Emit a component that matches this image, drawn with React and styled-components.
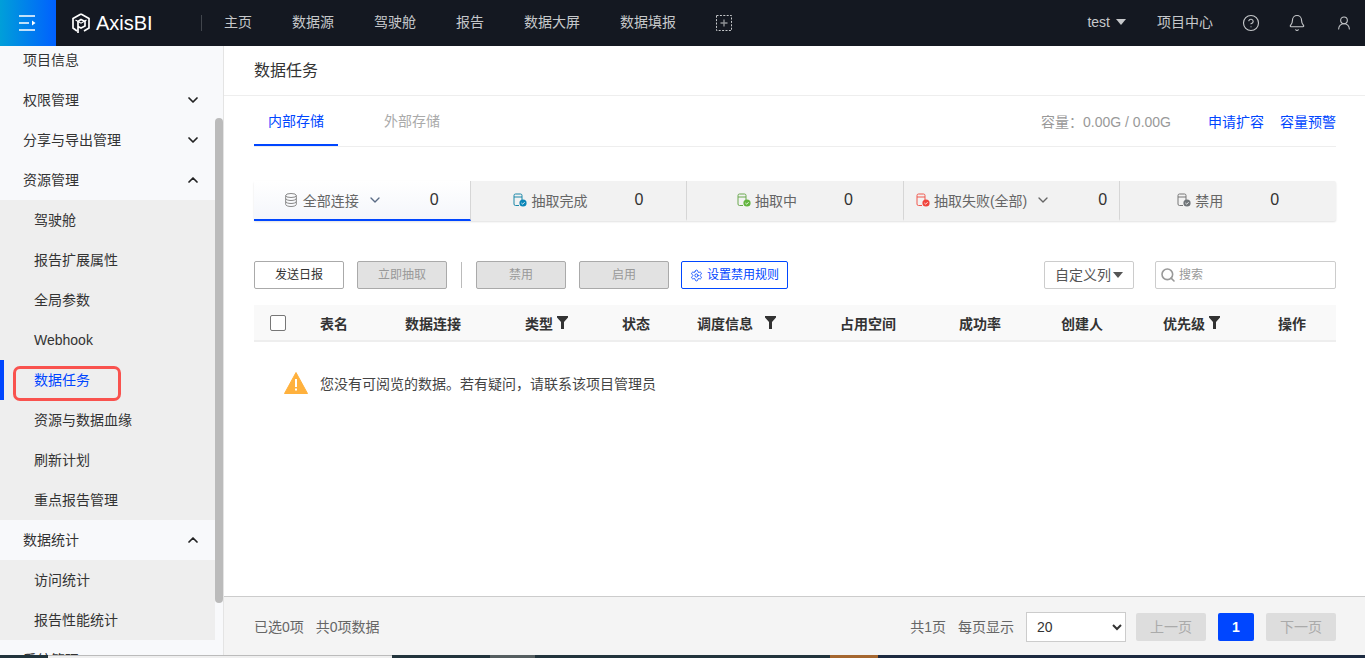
import React from 'react';
import styled, { createGlobalStyle } from 'styled-components';
import { ChevronDown, ChevronUp, Search, CircleHelp, Bell, UserRound, Settings } from 'lucide-react';

const FONT = '"Liberation Sans", "Noto Sans CJK SC", sans-serif';
const BLUE = '#0046ff';

const GlobalStyle = createGlobalStyle`
  html, body {
    margin: 0;
    padding: 0;
    height: 100%;
    overflow: hidden;
    background: #fff;
    font-family: ${FONT};
    font-size: 14px;
    line-height: 1.2;
    color: #333;
  }
  * { box-sizing: border-box; }
`;

const Page = styled.div`
  width: 1365px;
  height: 658px;
  display: flex;
  flex-direction: column;
  overflow: hidden;
`;

/* top bar */
const Header = styled.header`
  height: 46px;
  flex: none;
  display: flex;
  align-items: center;
  background: #141821;
  color: #c6c8cb;
`;

const MenuToggle = styled.div`
  width: 56px;
  height: 46px;
  display: flex;
  align-items: center;
  justify-content: center;
  background: linear-gradient(90deg, #009fd9, #0060ff);
`;

const Brand = styled.div`
  display: flex;
  align-items: center;
  gap: 6px;
  margin-left: 16px;
  color: #fff;
  font-size: 20px;
  width: 130px;
  border-right: 1px solid #41454c;
  height: 16px;
`;

const Nav = styled.nav`
  display: flex;
  align-items: center;
  gap: 40px;
  margin-left: 22px;
`;

const NavText = styled.span`
  padding-bottom: 2px;
`;

const UserArea = styled.div`
  margin-left: auto;
  display: flex;
  align-items: center;
  padding-right: 13px;
`;

const UserName = styled.span`
  display: flex;
  align-items: center;
  gap: 6px;
  margin-right: 31px;
  padding-bottom: 2px;
`;

const Caret = styled.i`
  width: 0;
  height: 0;
  border-left: 5.5px solid transparent;
  border-right: 5.5px solid transparent;
  border-top: 6px solid ${({ $color }) => $color || '#c6c8cb'};
`;

const ProjectCenter = styled.span`
  margin-right: 29px;
  padding-bottom: 2px;
`;

const TopIcon = styled.span`
  display: flex;
  margin-right: ${({ $gap }) => $gap}px;
`;

/* body */
const Body = styled.div`
  flex: 1;
  min-height: 0;
  display: flex;
`;

const Sidebar = styled.aside`
  width: 224px;
  flex: none;
  display: flex;
  background: #f8f9fb;
  border-right: 1px solid #e4e4e4;
  overflow: hidden;
`;

const SideMenu = styled.div`
  width: 215px;
  flex: none;
  margin-top: -6px;
`;

const GroupRow = styled.div`
  height: 40px;
  display: flex;
  align-items: center;
  justify-content: space-between;
  padding: 0 14px 0 23px;
  color: #333;
`;

const ChildList = styled.div`
  background: #eee;
`;

const ChildRow = styled.div`
  position: relative;
  height: 40px;
  display: flex;
  align-items: center;
  padding-left: 34px;
  color: ${({ $active }) => ($active ? BLUE : '#333')};
`;

const ActiveMark = styled.span`
  position: absolute;
  left: 0;
  top: 0;
  width: 4px;
  height: 40px;
  background: ${BLUE};
`;

const RedBox = styled.span`
  position: absolute;
  left: 13px;
  top: 6px;
  width: 108px;
  height: 35px;
  border: 3px solid #f9524e;
  border-radius: 7px;
`;

const ScrollTrack = styled.div`
  flex: 1;
  padding: 72px 0 0;
`;

const ScrollThumb = styled.div`
  width: 8px;
  height: 485px;
  border-radius: 4px;
  background: #bbb;
`;

const Main = styled.main`
  flex: 1;
  min-width: 0;
  display: flex;
  flex-direction: column;
`;

const TitleBar = styled.div`
  height: 50px;
  flex: none;
  display: flex;
  align-items: center;
  padding: 1px 0 0 30px;
  font-size: 16px;
  color: #333;
  border-bottom: 1px solid #eee;
`;

const Content = styled.div`
  flex: 1;
  min-height: 0;
  padding: 0 29px 0 30px;
`;

const TabBar = styled.div`
  height: 51px;
  display: flex;
  align-items: stretch;
  line-height: normal;
  border-bottom: 1px solid #eee;
`;

const Tab = styled.div`
  width: ${({ $active }) => ($active ? 84 : 148)}px;
  height: 50px;
  display: flex;
  align-items: center;
  justify-content: center;
  color: ${({ $active }) => ($active ? BLUE : '#aaa')};
  border-bottom: 2px solid ${({ $active }) => ($active ? BLUE : 'transparent')};
`;

const Capacity = styled.div`
  margin-left: auto;
  display: flex;
  align-items: center;
  color: #999;
`;

const CapacityLink = styled.a`
  color: ${BLUE};
  margin-left: ${({ $gap }) => $gap}px;
`;

const StatBar = styled.div`
  margin-top: 34px;
  height: 40px;
  display: flex;
  line-height: normal;
  background: #f2f2f2;
  border-radius: 2px;
  box-shadow: 0 1px 2px rgba(0, 0, 0, 0.12);
`;

const StatTab = styled.div`
  flex: 1;
  display: flex;
  align-items: center;
  justify-content: center;
  color: #666;
  font-size: 14px;
  background: ${({ $active }) => ($active ? 'linear-gradient(180deg, #fff, #f4f6fb)' : 'none')};
  border-bottom: 2px solid ${({ $active }) => ($active ? BLUE : 'transparent')};
  border-right: ${({ $last }) => ($last ? 'none' : '1px solid #d6d6d6')};
`;

const StatLabel = styled.span`
  margin-left: ${({ $gap }) => $gap || 4}px;
`;

const StatChevron = styled.span`
  display: flex;
  margin-left: 8px;
  color: #666;
`;

const StatValue = styled.span`
  margin-left: 47px;
  font-size: 16px;
  color: #333;
`;

const Toolbar = styled.div`
  margin-top: 40px;
  height: 28px;
  display: flex;
  align-items: stretch;
`;

const ToolButton = styled.div`
  width: ${({ $width }) => $width || 90}px;
  margin-right: ${({ $gap }) => $gap ?? 13}px;
  display: flex;
  align-items: center;
  justify-content: center;
  gap: 4px;
  font-size: 12px;
  border-radius: 2px;
  border: 1px solid ${({ $primary }) => ($primary ? BLUE : '#aaa')};
  background: ${({ $disabled }) => ($disabled ? '#e2e2e2' : '#fff')};
  color: ${({ $primary, $disabled }) => ($primary ? BLUE : $disabled ? '#999' : '#333')};
`;

const ToolDivider = styled.span`
  width: 1px;
  height: 26px;
  align-self: center;
  margin: 0 14px 0 1px;
  background: #bbb;
`;

const ColumnPicker = styled.div`
  margin-left: auto;
  width: 90px;
  display: flex;
  align-items: center;
  justify-content: center;
  gap: 2px;
  font-size: 14px;
  color: #555;
  border: 1px solid #ccc;
  border-radius: 2px;
`;

const SearchBox = styled.div`
  width: 181px;
  margin-left: 21px;
  display: flex;
  align-items: center;
  gap: 3px;
  padding-left: 4px;
  font-size: 12px;
  color: #999;
  border: 1px solid #ccc;
  border-radius: 2px;
`;

const TableHead = styled.div`
  margin-top: 16px;
  height: 37px;
  display: grid;
  grid-template-columns: 50px 85px 120px 97px 75px 143px 119px 102px 102px 115px 1fr;
  align-items: center;
  padding-left: 16px;
  background: #f9f9f9;
  border-bottom: 2px solid #eee;
  font-weight: 700;
  font-size: 14px;
  line-height: normal;
  color: #333;
`;

const CheckBox = styled.span`
  display: block;
  width: 16px;
  height: 16px;
  border: 1px solid #777;
  border-radius: 2px;
  background: #fff;
`;

const HeadCell = styled.span`
  display: flex;
  align-items: center;
  gap: ${({ $gap }) => $gap ?? 4}px;
`;

const Notice = styled.div`
  margin-top: 30px;
  padding-left: 30px;
  display: flex;
  align-items: center;
  gap: 12px;
  font-size: 14px;
  line-height: normal;
  color: #444;
`;

const Footer = styled.div`
  height: 59px;
  flex: none;
  display: flex;
  align-items: center;
  padding: 2px 29px 0 30px;
  background: #f4f4f4;
  border-top: 1px solid #ccc;
  font-size: 14px;
  color: #666;
`;

const FooterNote = styled.span`
  margin-right: ${({ $gap }) => $gap}px;
`;

const Pager = styled.div`
  margin-left: auto;
  display: flex;
  align-items: center;
`;

const SizeSelect = styled.select`
  width: 100px;
  height: 30px;
  margin: 0 10px 0 12px;
  padding-left: 6px;
  background: #fff;
  border: 1px solid #ccc;
  font-family: ${FONT};
  font-size: 14px;
  color: #333;
`;

const PageButton = styled.div`
  width: ${({ $current }) => ($current ? 36 : 70)}px;
  height: 28px;
  margin-right: ${({ $gap }) => $gap || 0}px;
  display: flex;
  align-items: center;
  justify-content: center;
  border-radius: 2px;
  background: ${({ $current }) => ($current ? BLUE : '#ddd')};
  color: ${({ $current }) => ($current ? '#fff' : '#aaa')};
  font-weight: ${({ $current }) => ($current ? 700 : 400)};
`;

/* strip of the desktop visible under the window */
const Strip = styled.div`
  height: 3px;
  flex: none;
  display: flex;
`;

const StripPart = styled.span`
  width: ${({ $width }) => $width}px;
  flex-grow: ${({ $grow }) => ($grow ? 1 : 0)};
  background: ${({ $color }) => $color};
  border-top: ${({ $line }) => ($line ? '1px solid #bbb' : 'none')};
`;

const HamburgerIcon = () => (
  <svg width="20" height="20" viewBox="0 0 20 20" fill="none" stroke="#fff" strokeWidth="1.5">
    <path d="M1 3h16M1 10h10M1 17h16" />
    <path d="M14 7.5v5l3.5-2.5z" fill="#fff" stroke="none" />
  </svg>
);

const LogoIcon = () => (
  <svg width="18" height="21" viewBox="0 0 18 21" fill="none" stroke="#fff" strokeWidth="1.7">
    <path d="M9 1l8 4.5v9.5L12 18M9 1L1 5.5v9.5l4 3" />
    <path d="M6 20V8.5l3-2 4 2v4.5l-4 2-3-1.5" />
    <path d="M3.5 7L9 10.2 14.5 7" strokeWidth="1.1" />
  </svg>
);

const AddScreenIcon = () => (
  <svg width="16" height="16" viewBox="0 0 16 16" fill="none" stroke="#c6c8cb">
    <rect x="0.5" y="0.5" width="15" height="15" strokeDasharray="2 1.4" />
    <path d="M8 4.5v7M4.5 8h7" strokeWidth="1.4" stroke="#8d9094" />
  </svg>
);

const DatabaseIcon = () => (
  <svg width="12" height="14" viewBox="0 0 12 14" fill="none" stroke="#888" strokeWidth="1">
    <ellipse cx="6" cy="2.5" rx="5.3" ry="2" />
    <path d="M.7 2.5v9c0 1.1 2.4 2 5.3 2s5.3-.9 5.3-2v-9M.7 5.5c0 1.1 2.4 2 5.3 2s5.3-.9 5.3-2M.7 8.5c0 1.1 2.4 2 5.3 2s5.3-.9 5.3-2" />
  </svg>
);

const StatusIcon = ({ color, mark }) => (
  <svg width="14" height="14" viewBox="0 0 14 14" fill="none">
    <path d="M6 12.5H2.5a1.5 1.5 0 0 1-1.5-1.5V2.5A1.5 1.5 0 0 1 2.5 1h5A1.5 1.5 0 0 1 9 2.5V7M1 4h8" stroke={color} strokeWidth="1" />
    <circle cx="10" cy="10" r="3.6" fill={mark} />
    <path d="M8.4 10l1.2 1.2 2-2" stroke="#fff" strokeWidth="0.9" />
  </svg>
);

const FilterIcon = () => (
  <svg width="11" height="13" viewBox="0 0 11 13">
    <path d="M0 0h11v1.6L7 6v7H4V6L0 1.6z" fill="#333" />
  </svg>
);

const WarningIcon = () => (
  <svg width="24" height="22" viewBox="0 0 24 22">
    <path d="M12 0.5l11.5 21H.5z" fill="#ffb13d" stroke="#ffb13d" strokeLinejoin="round" />
    <path d="M11 7h2v8h-2zM11 16.5h2v2h-2z" fill="#fff" />
  </svg>
);

const navItems = ['主页', '数据源', '驾驶舱', '报告', '数据大屏', '数据填报'];

const columns = [
  { label: '表名' },
  { label: '数据连接' },
  { label: '类型', filter: true },
  { label: '状态' },
  { label: '调度信息', filter: true, gap: 12 },
  { label: '占用空间' },
  { label: '成功率' },
  { label: '创建人' },
  { label: '优先级', filter: true },
  { label: '操作' },
];

const stats = [
  { label: '抽取完成', color: '#1b87a8', mark: '#0a86b8' },
  { label: '抽取中', color: '#6aa84f', mark: '#63b53e' },
  { label: '抽取失败(全部)', color: '#f0594f', mark: '#f0443c', chevron: true },
  { label: '禁用', color: '#777', mark: '#6f7478', last: true },
];

const Chevron = ({ open }) => {
  const Icon = open ? ChevronUp : ChevronDown;
  return <Icon size={16} strokeWidth={2.6} color="#222" />;
};

export default function App() {
  return (
    <>
      <GlobalStyle />
      <Page>
        <Header>
          <MenuToggle><HamburgerIcon /></MenuToggle>
          <Brand><LogoIcon />AxisBI</Brand>
          <Nav>
            {navItems.map(item => <NavText key={item}>{item}</NavText>)}
            <AddScreenIcon />
          </Nav>
          <UserArea>
            <UserName>test <Caret /></UserName>
            <ProjectCenter>项目中心</ProjectCenter>
            <TopIcon $gap={28}><CircleHelp size={18} strokeWidth={1.5} /></TopIcon>
            <TopIcon $gap={30}><Bell size={18} strokeWidth={1.5} /></TopIcon>
            <TopIcon $gap={0}><UserRound size={16} strokeWidth={1.6} /></TopIcon>
          </UserArea>
        </Header>

        <Body>
          <Sidebar>
            <SideMenu>
              <GroupRow>项目信息</GroupRow>
              <GroupRow>权限管理<Chevron /></GroupRow>
              <GroupRow>分享与导出管理<Chevron /></GroupRow>
              <GroupRow>资源管理<Chevron open /></GroupRow>
              <ChildList>
                <ChildRow>驾驶舱</ChildRow>
                <ChildRow>报告扩展属性</ChildRow>
                <ChildRow>全局参数</ChildRow>
                <ChildRow>Webhook</ChildRow>
                <ChildRow $active>
                  <ActiveMark />
                  <RedBox />
                  数据任务
                </ChildRow>
                <ChildRow>资源与数据血缘</ChildRow>
                <ChildRow>刷新计划</ChildRow>
                <ChildRow>重点报告管理</ChildRow>
              </ChildList>
              <GroupRow>数据统计<Chevron open /></GroupRow>
              <ChildList>
                <ChildRow>访问统计</ChildRow>
                <ChildRow>报告性能统计</ChildRow>
              </ChildList>
              <GroupRow>系统管理</GroupRow>
            </SideMenu>
            <ScrollTrack><ScrollThumb /></ScrollTrack>
          </Sidebar>

          <Main>
            <TitleBar>数据任务</TitleBar>
            <Content>
              <TabBar>
                <Tab $active>内部存储</Tab>
                <Tab>外部存储</Tab>
                <Capacity>
                  容量：0.00G / 0.00G
                  <CapacityLink $gap={37}>申请扩容</CapacityLink>
                  <CapacityLink $gap={16}>容量预警</CapacityLink>
                </Capacity>
              </TabBar>

              <StatBar>
                <StatTab $active>
                  <DatabaseIcon />
                  <StatLabel $gap={6}>全部连接</StatLabel>
                  <StatChevron><ChevronDown size={16} strokeWidth={2} color="#5a6b85" /></StatChevron>
                  <StatValue>0</StatValue>
                </StatTab>
                {stats.map(s => (
                  <StatTab key={s.label} $last={s.last}>
                    <StatusIcon color={s.color} mark={s.mark} />
                    <StatLabel>{s.label}</StatLabel>
                    {s.chevron && <StatChevron><ChevronDown size={16} strokeWidth={2} /></StatChevron>}
                    <StatValue>0</StatValue>
                  </StatTab>
                ))}
              </StatBar>

              <Toolbar>
                <ToolButton>发送日报</ToolButton>
                <ToolButton $disabled>立即抽取</ToolButton>
                <ToolDivider />
                <ToolButton $disabled>禁用</ToolButton>
                <ToolButton $disabled $gap={12}>启用</ToolButton>
                <ToolButton $primary $width={107} $gap={0}>
                  <Settings size={13} strokeWidth={1.6} />
                  设置禁用规则
                </ToolButton>
                <ColumnPicker>自定义列<Caret $color="#555" /></ColumnPicker>
                <SearchBox>
                  <Search size={16} color="#999" strokeWidth={2.4} />
                  搜索
                </SearchBox>
              </Toolbar>

              <TableHead>
                <CheckBox />
                {columns.map(col => (
                  <HeadCell key={col.label} $gap={col.gap}>
                    {col.label}
                    {col.filter && <FilterIcon />}
                  </HeadCell>
                ))}
              </TableHead>

              <Notice>
                <WarningIcon />
                您没有可阅览的数据。若有疑问，请联系该项目管理员
              </Notice>
            </Content>

            <Footer>
              <FooterNote $gap={12}>已选0项</FooterNote>
              <FooterNote $gap={0}>共0项数据</FooterNote>
              <Pager>
                <FooterNote $gap={12}>共1页</FooterNote>
                每页显示
                <SizeSelect defaultValue="20">
                  <option value="20">20</option>
                  <option value="50">50</option>
                </SizeSelect>
                <PageButton $gap={12}>上一页</PageButton>
                <PageButton $current $gap={12}>1</PageButton>
                <PageButton>下一页</PageButton>
              </Pager>
            </Footer>
          </Main>
        </Body>

        <Strip>
          <StripPart $width={48} $color="#22343c" />
          <StripPart $width={344} $color="#efefef" $line />
          <StripPart $width={98} $color="#22343c" />
          <StripPart $width={45} $color="#555e60" />
          <StripPart $width={295} $color="#22343c" />
          <StripPart $width={48} $color="#a5672f" />
          <StripPart $width={487} $grow $color="#1c2a40" />
        </Strip>
      </Page>
    </>
  );
}
